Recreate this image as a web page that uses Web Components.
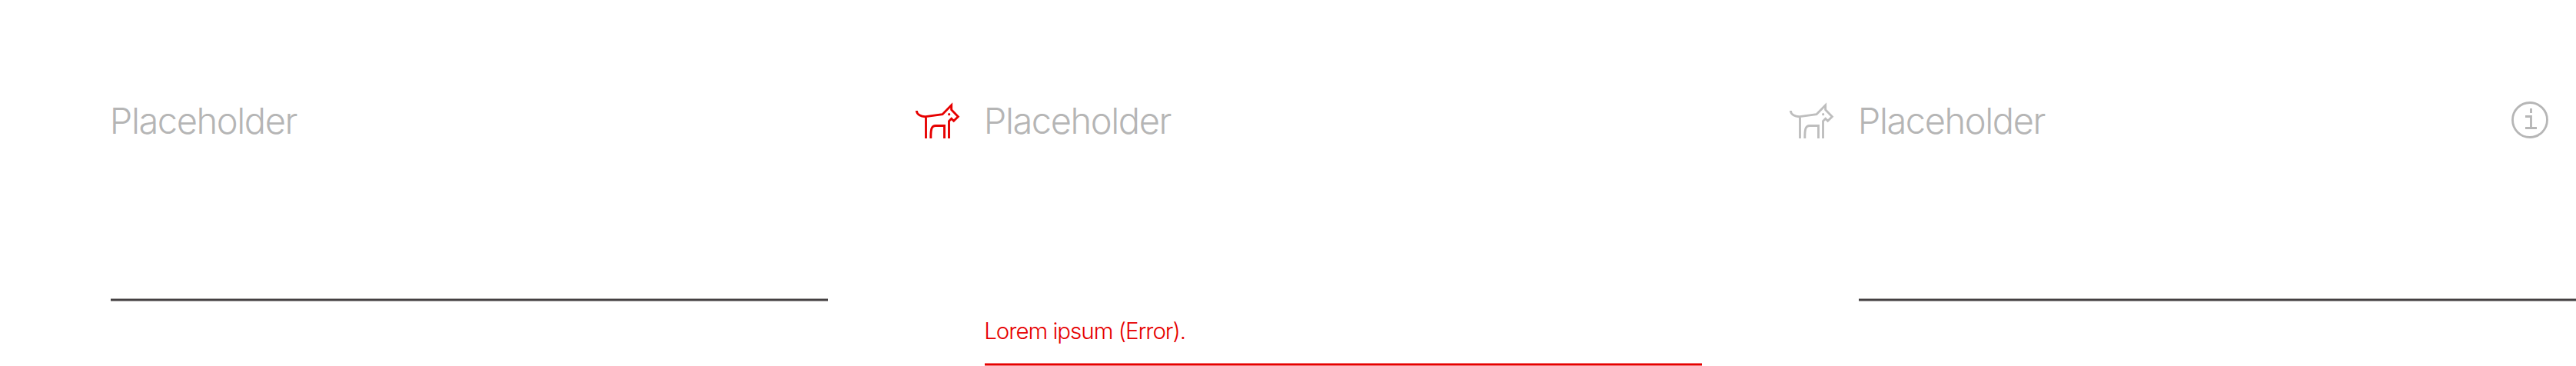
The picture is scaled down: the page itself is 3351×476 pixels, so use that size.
<!DOCTYPE html>
<html lang="en"><head><meta charset="utf-8"><title>Text fields</title>
<style>body{margin:0;background:#fff;font-family:Inter,"Liberation Sans",sans-serif;font-weight:300}</style></head>
<body>
<field-row>
<text-field label="Placeholder"></text-field>
<text-field label="Placeholder" error="Lorem ipsum (Error)."><dog-icon slot="icon" style="color:#e60000"></dog-icon></text-field>
<text-field label="Placeholder"><dog-icon slot="icon"></dog-icon><info-icon slot="action"></info-icon></text-field>
</field-row>
<script>
const define = (name, html, setup) => customElements.define(name, class extends HTMLElement {
  connectedCallback() {
    if (this.shadowRoot) return;
    this.attachShadow({mode: 'open'}).innerHTML = html;
    if (setup) setup(this, this.shadowRoot);
  }
});
define('dog-icon', `<style>:host{display:block;width:80px;height:70px;color:#bebebe}svg{display:block}</style>
<svg width="80" height="70" viewBox="0 0 240 210" fill="none" stroke="currentColor" stroke-width="8.6" stroke-miterlimit="10">
<path d="M37 72C38 87 54 96 73 95L138 86L173 50V68L199 95L182 112L173 103L163.500 112.500V180M73.500 94V180M92.500 180V170C93 141 97 130.500 111 130.500H145.500V180"/>
<circle cx="164" cy="86" r="4.800" fill="currentColor" stroke="none"/></svg>`);
define('info-icon', `<style>:host{display:block;width:50px;height:50px;color:#b6b6b6}svg{display:block}</style>
<svg width="50" height="50" viewBox="0 0 150 150" fill="none" stroke="currentColor" stroke-width="8.500">
<circle cx="75" cy="75" r="67.500"/><path d="M79.500 30V48M57 61.500H79.500V106M57 106.500H102"/></svg>`);
define('text-field', `<style>
:host{display:grid;grid-template-columns:101px 933px;align-items:start}
.icon{height:70px}
.head{display:flex;justify-content:space-between;align-items:flex-start;height:268px;box-sizing:border-box}
.label{font-size:47px;line-height:70px;letter-spacing:-1.420px;color:#b5b5b5;padding-top:2px;margin-left:-1.200px}
.action{padding:11px 35px 0 0}
.error{height:84px;box-sizing:border-box;padding-top:24px;font-size:29.500px;line-height:36px;letter-spacing:-1.020px;color:#e60000;margin-left:-.800px}
.line{height:4px;display:block;color:#454142}
.line.bad{color:#e60000}
</style>
<div class="icon"><slot name="icon"></slot></div>
<div><div class="head"><div class="label"></div><div class="action"><slot name="action"></slot></div></div>
<div class="error" hidden></div>
<svg class="line" width="933" height="4"><rect y=".5" width="933" height="3" fill="currentColor"/></svg></div>`,
(el, root) => {
  root.querySelector('.label').textContent = el.getAttribute('label');
  const err = el.getAttribute('error'), box = root.querySelector('.error');
  if (err) { box.hidden = false; box.textContent = err; root.querySelector('.line').classList.add('bad'); }
  else box.remove();
});
define('field-row', `<style>:host{display:flex;gap:103px;height:476px;box-sizing:border-box;padding:120px 0 0 43px;overflow:hidden}</style><slot></slot>`);
</script>
</body></html>
